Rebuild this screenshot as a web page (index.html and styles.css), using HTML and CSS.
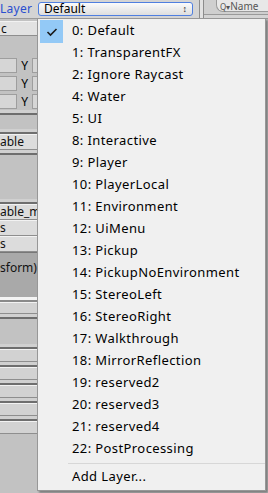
FILE: index.html
```html
<!DOCTYPE html>
<html lang="en">
<head>
    <meta charset="UTF-8">
    <title>Layer menu</title>
    <link rel="stylesheet" href="styles.css">
</head>
<body>
    <div class="toolbar">
        <span class="layer-label">Layer</span>
        <div class="layer-select">
            <span>Default</span>
            <span class="arrows">&#x2195;</span>
        </div>
        <div class="split"></div>
        <div class="hier-bar">
            <div class="search"><span class="search-icon">Q&#x25BE;</span>Name</div>
        </div>
    </div>

    <div class="inspector">
        <div class="field top-field">c</div>
        <div class="gap g20"></div>
        <div class="vec-row"><div class="box"></div><span>Y</span><div class="box small"></div></div>
        <div class="vec-row"><div class="box"></div><span>Y</span><div class="box small"></div></div>
        <div class="vec-row"><div class="box"></div><span>Y</span><div class="box small"></div></div>
        <div class="rule"></div>
        <div class="gap g14"></div>
        <div class="rule"></div>
        <div class="field">able</div>
        <div class="rule"></div>
        <div class="gap g44"></div>
        <div class="rule"></div>
        <div class="field">able_m</div>
        <div class="field">s</div>
        <div class="field">s</div>
        <div class="field dark">sform)</div>
        <div class="rule light"></div>
        <div class="field plain short"></div>
        <div class="rule"></div>
        <div class="gap g25"></div>
        <div class="rule"></div>
        <div class="field plain"></div>
        <div class="rule"></div>
        <div class="field plain"></div>
        <div class="rule"></div>
        <div class="field plain"></div>
        <div class="rule"></div>
        <div class="field plain"></div>
        <div class="rule"></div>
        <div class="field plain"></div>
    </div>

    <div class="menu">
        <div class="item checked"><span class="check"><svg width="12" height="10" viewBox="0 0 12 10"><path d="M1.5 5 L4.5 8 L10.5 2" fill="none" stroke="#1b1b1b" stroke-width="1.6"/></svg></span>0: Default</div>
        <div class="item">1: TransparentFX</div>
        <div class="item">2: Ignore Raycast</div>
        <div class="item">4: Water</div>
        <div class="item">5: UI</div>
        <div class="item">8: Interactive</div>
        <div class="item">9: Player</div>
        <div class="item">10: PlayerLocal</div>
        <div class="item">11: Environment</div>
        <div class="item">12: UiMenu</div>
        <div class="item">13: Pickup</div>
        <div class="item">14: PickupNoEnvironment</div>
        <div class="item">15: StereoLeft</div>
        <div class="item">16: StereoRight</div>
        <div class="item">17: Walkthrough</div>
        <div class="item">18: MirrorReflection</div>
        <div class="item">19: reserved2</div>
        <div class="item">20: reserved3</div>
        <div class="item">21: reserved4</div>
        <div class="item">22: PostProcessing</div>
        <div class="sep"></div>
        <div class="item">Add Layer...</div>
    </div>
</body>
</html>
```

FILE: styles.css
```css
body, html {
    margin: 0;
    padding: 0;
    width: 268px;
    height: 493px;
    overflow: hidden;
    font-family: "Noto Sans", "Liberation Sans", sans-serif;
    font-size: 12px;
    background-color: #c2c2c2;
}
.toolbar {
    height: 18px;
    display: flex;
    align-items: flex-start;
    background-color: #d4d4d4;
    border-bottom: 1px solid #9a9a9a;
}
.layer-label {
    width: 38px;
    padding-top: 1px;
    color: #2a4fd0;
    font-size: 12px;
    line-height: 16px;
    letter-spacing: 0.3px;
}
.layer-select {
    margin-top: 2px;
    width: 143px;
    height: 12px;
    border: 1px solid #4f7fe0;
    border-radius: 3px;
    background: linear-gradient(#fbfbfb, #dedede);
    display: flex;
    justify-content: space-between;
    align-items: center;
    padding: 0 5px;
    box-sizing: content-box;
    font-size: 12px;
    line-height: 12px;
}
.arrows {
    font-size: 9px;
    color: #222;
}
.split {
    margin-left: 6px;
    width: 3px;
    height: 18px;
    border-left: 1px solid #8c8c8c;
    border-right: 1px solid #8c8c8c;
    background-color: #e2e2e2;
}
.hier-bar {
    flex: 1;
    min-width: 0;
    height: 14px;
    border-bottom: 1px solid #9a9a9a;
    background-color: #cfcfcf;
    padding-left: 12px;
}
.search {
    height: 12px;
    padding-top: 1px;
    border: 1px solid #9a9a9a;
    border-top: none;
    border-right: none;
    border-radius: 0 0 0 7px;
    background-color: #e8e8e8;
    color: #555;
    font-size: 10px;
    line-height: 11px;
    padding-left: 3px;
    white-space: nowrap;
    box-sizing: border-box;
}
.search-icon {
    font-size: 8px;
}

.inspector {
    width: 37px;
    display: flex;
    flex-direction: column;
    padding-top: 2px;
}
.field {
    height: 14px;
    line-height: 14px;
    background-color: #dcdcdc;
    border-top: 1px solid #f2f2f2;
    border-bottom: 1px solid #8e8e8e;
    font-size: 12px;
    color: #111;
    white-space: nowrap;
    overflow: hidden;
}
.field.top-field {
    background-color: #e2e2e2;
    height: 13px;
    padding-left: 1px;
}
.field.dark {
    height: 36px;
    padding-top: 8px;
    background-color: #a9a9a9;
    border-top: 1px solid #777;
    border-bottom: none;
}
.field.plain {
    height: 11px;
    background-color: #d2d2d2;
}
.field.plain.short { height: 10px; }
.gap { background-color: #c2c2c2; }
.g14 { height: 14px; }
.g20 { height: 20px; }
.g25 { height: 25px; }
.g44 { height: 44px; }
.rule {
    height: 3px;
    background-color: #d0d0d0;
    border-bottom: 2px solid #6e6e6e;
}
.rule.light {
    background-color: #f4f4f4;
    border-bottom: 2px solid #8a8a8a;
}
.vec-row {
    height: 18px;
    display: flex;
    align-items: center;
    gap: 4px;
}
.vec-row .box {
    width: 17px;
    height: 13px;
    background-color: #d6d6d6;
    border: 1px solid #9e9e9e;
    border-left: none;
}
.vec-row .box.small {
    width: 4px;
    border-left: 1px solid #9e9e9e;
    border-right: none;
}
.vec-row span { font-size: 12px; }

.menu {
    position: absolute;
    left: 37px;
    top: 18px;
    width: 227px;
    height: 470px;
    padding-top: 1px;
    background-color: #f0f0f0;
    border: 1px solid #979797;
    box-shadow: 2px 2px 2px rgba(0,0,0,0.35);
}
.item {
    height: 22px;
    line-height: 21px;
    padding-left: 34px;
    position: relative;
    color: #000;
    font-size: 13px;
    letter-spacing: 0.4px;
    white-space: nowrap;
}
.check {
    position: absolute;
    left: 2px;
    top: 0;
    width: 23px;
    height: 23px;
    background-color: #93c9f6;
    display: flex;
    align-items: center;
    justify-content: center;
}
.sep {
    height: 1px;
    margin: 3px 0 2px 30px;
    background-color: #d7d7d7;
}
```
